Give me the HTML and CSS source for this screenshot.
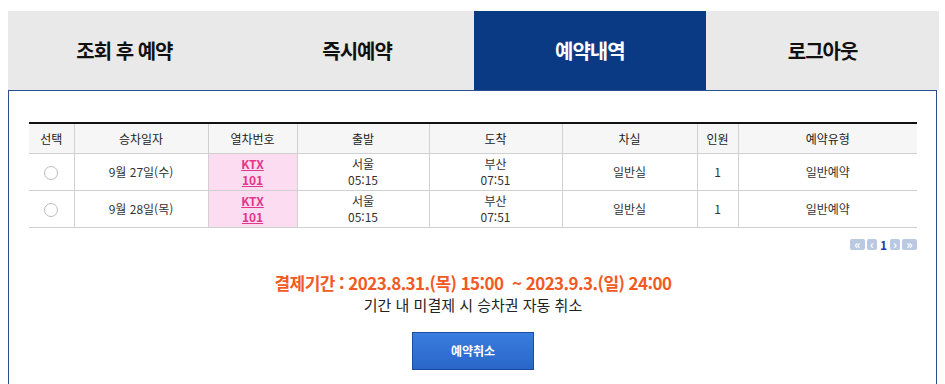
FILE: index.html
```html
<!DOCTYPE html>
<html lang="ko">
<head>
    <meta charset="UTF-8">
    <meta name="viewport" content="width=device-width, initial-scale=1.0">
    <title>예약내역</title>
    <link rel="stylesheet" href="styles.css">
</head>
<body>
    <div class="page">
        <nav class="tab-bar">
            <a class="tab" href="javascript:void(0)">조회 후 예약</a>
            <a class="tab" href="javascript:void(0)">즉시예약</a>
            <a class="tab active" href="javascript:void(0)">예약내역</a>
            <a class="tab" href="javascript:void(0)">로그아웃</a>
        </nav>
        <div class="panel">
            <table class="list">
                <colgroup>
                    <col style="width:45px">
                    <col style="width:134px">
                    <col style="width:89px">
                    <col style="width:132px">
                    <col style="width:133px">
                    <col style="width:135px">
                    <col style="width:41px">
                    <col>
                </colgroup>
                <thead>
                    <tr>
                        <th>선택</th>
                        <th>승차일자</th>
                        <th>열차번호</th>
                        <th>출발</th>
                        <th>도착</th>
                        <th>차실</th>
                        <th>인원</th>
                        <th>예약유형</th>
                    </tr>
                </thead>
                <tbody>
                    <tr>
                        <td><input type="radio" name="pick" class="radio"></td>
                        <td>9월 27일(수)</td>
                        <td class="train"><a href="javascript:void(0)">KTX<br>101</a></td>
                        <td>서울<br>05:15</td>
                        <td>부산<br>07:51</td>
                        <td>일반실</td>
                        <td>1</td>
                        <td>일반예약</td>
                    </tr>
                    <tr>
                        <td><input type="radio" name="pick" class="radio"></td>
                        <td>9월 28일(목)</td>
                        <td class="train"><a href="javascript:void(0)">KTX<br>101</a></td>
                        <td>서울<br>05:15</td>
                        <td>부산<br>07:51</td>
                        <td>일반실</td>
                        <td>1</td>
                        <td>일반예약</td>
                    </tr>
                </tbody>
            </table>

            <div class="pager">
                <span class="pg-btn wide">&laquo;</span>
                <span class="pg-btn">&lsaquo;</span>
                <span class="pg-num">1</span>
                <span class="pg-btn">&rsaquo;</span>
                <span class="pg-btn wide">&raquo;</span>
            </div>

            <div class="notice">
                <p class="period">결제기간 : 2023.8.31.(목) 15:00&nbsp; ~ 2023.9.3.(일) 24:00</p>
                <p class="warn">기간 내 미결제 시 승차권 자동 취소</p>
                <a class="cancel-button" href="javascript:void(0)">예약취소</a>
            </div>
        </div>
    </div>
</body>
</html>
```

FILE: styles.css
```css
html, body {
    margin : 0;
    padding: 0;
    background-color: #fff;
    font-family: "Noto Sans CJK KR", "Noto Sans", sans-serif;
    color: #333;
}
.page {
    padding: 11px 0 0 8px;
    width  : 929px;
}
.tab-bar {
    display: grid;
    grid-template-columns: repeat(4, 1fr);
    height : 79px;
    background-color: #e9e9e9;
    width: 931px;
}
.tab {
    display: flex;
    align-items    : center;
    justify-content: center;

    color          : #111;
    font-size      : 20px;
    font-weight    : 700;
    letter-spacing : -1px;
    text-decoration: none;
}
.tab.active {
    color           : #fff;
    background-color: #0b3a85;
}
.panel {
    border     : 1px solid #2b4e92;
    border-bottom: none;
    padding    : 31px 0 40px 20px;
    height     : 300px;
    box-sizing : border-box;
}
table.list {
    width          : 888px;
    border-collapse: collapse;
    table-layout   : fixed;
    border-top     : 2px solid #111;
    font-size      : 12px;
}
.list th {
    height          : 29px;
    padding         : 0;
    font-weight     : 400;
    color           : #222;
    background-color: #f6f6f6;
    border          : 1px solid #d0d0d0;
    border-top      : none;
}
.list td {
    height     : 36px;
    padding    : 0;
    text-align : center;
    line-height: 16px;
    color      : #333;
    border     : 1px solid #d0d0d0;
}
.list th:first-child, .list td:first-child {
    border-left: none;
}
.list th:last-child, .list td:last-child {
    border-right: none;
}
.list td.train {
    background-color: #fbdcf0;
}
.list td.train a {
    color          : #e2378a;
    font-weight    : 700;
    text-decoration: underline;
}
.radio {
    width : 14px;
    height: 14px;
    margin: 0;
    vertical-align: middle;
    appearance: none;
    border: 1px solid #bbb;
    border-radius: 50%;
    background-color: #fff;
}
.pager {
    display        : flex;
    justify-content: flex-end;
    align-items    : center;
    gap            : 2px;
    width          : 888px;
    margin-top     : 10px;
    height         : 12px;
}
.pg-btn {
    display: inline-flex;
    align-items    : center;
    justify-content: center;
    width : 10px;
    height: 11px;
    border-radius: 2px;
    background-color: #b9c9e2;
    color      : #fff;
    font-size  : 12px;
    font-weight: 700;
    line-height: 1;
}
.pg-btn.wide {
    width: 15px;
}
.pg-num {
    color      : #1a3fb0;
    font-size  : 12px;
    font-weight: 700;
    padding    : 0 1px;
}
.notice {
    width     : 888px;
    text-align: center;
}
.notice p {
    margin: 0;
}
.period {
    margin-top    : 21px !important;
    color         : #f15a22;
    font-size     : 17px;
    font-weight   : 700;
    letter-spacing: -0.55px;
    line-height   : 24px;
}
.warn {
    color      : #222;
    font-size  : 15px;
    line-height: 20px;
}
.cancel-button {
    display   : inline-block;
    margin-top: 17px;
    width     : 122px;
    height    : 38px;
    box-sizing: border-box;
    line-height: 36px;
    border    : 1px solid #1b4d9e;
    background: linear-gradient(#3a7ce0, #2a66c8);
    color     : #fff;
    font-size : 12px;
    font-weight: 700;
    text-decoration: none;
}
```
